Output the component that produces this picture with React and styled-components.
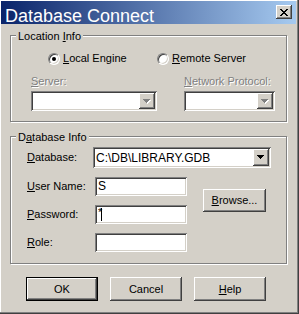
import React from "react";
import styled, { createGlobalStyle } from "styled-components";

const GlobalStyle = createGlobalStyle`
  html, body {
    margin: 0;
    padding: 0;
    background: #d4d0c8;
  }
  body {
    font-family: "Liberation Sans", Arial, sans-serif;
    font-size: 11px;
    color: #000;
  }
`;

const raised = `
  box-shadow: inset -1px -1px #404040, inset 1px 1px #fff,
    inset -2px -2px #808080, inset 2px 2px #d4d0c8;
`;

const sunken = `
  box-shadow: inset 1px 1px #808080, inset -1px -1px #fff,
    inset 2px 2px #404040, inset -2px -2px #d4d0c8;
`;

const Window = styled.div`
  width: 299px;
  height: 314px;
  box-sizing: border-box;
  padding: 1px 3px 2px 1px;
  background: #d4d0c8;
  box-shadow: inset -1px -1px #404040, inset -2px -2px #808080,
    inset 1px 1px #fff;
  display: flex;
  flex-direction: column;
`;

const TitleBar = styled.div`
  height: 23px;
  background: linear-gradient(to right, #0a246a, #a6caf0);
  display: flex;
  align-items: flex-start;
  justify-content: space-between;
  padding: 0 4px 0 4px;
`;

const Title = styled.span`
  color: #fff;
  font-size: 18px;
  line-height: 18px;
  margin-top: 6px;
`;

const CloseButton = styled.div`
  width: 16px;
  height: 14px;
  margin-top: 4px;
  background: #d4d0c8;
  ${raised}
  display: flex;
  align-items: center;
  justify-content: center;
`;

const Body = styled.div`
  padding: 11px 0 0 9px;
  display: flex;
  flex-direction: column;
`;

const Group = styled.div`
  position: relative;
  width: 277px;
  height: ${(p) => p.$h}px;
  box-sizing: border-box;
  border: 1px solid #808080;
  box-shadow: inset 1px 1px #fff, 1px 1px #fff;
  margin-bottom: ${(p) => p.$mb || 0}px;
  padding: ${(p) => p.$pad};
`;

const Legend = styled.span`
  position: absolute;
  top: -6px;
  left: 5px;
  padding: 0 2px;
  line-height: 13px;
  background: #d4d0c8;
`;

const Key = styled.span`
  text-decoration: underline;
`;

const Row = styled.div`
  display: flex;
  gap: ${(p) => p.$gap || 0}px;
  padding-left: ${(p) => p.$left || 0}px;
  margin-top: ${(p) => p.$top || 0}px;
`;

const RadioItem = styled.label`
  display: flex;
  align-items: center;
  gap: 3px;
  width: ${(p) => (p.$w ? `${p.$w}px` : "auto")};
  line-height: 13px;
`;

const RadioCircle = styled.span`
  width: 12px;
  height: 12px;
  box-sizing: border-box;
  border-radius: 50%;
  background: #fff;
  border: 1px solid;
  border-color: #808080 #fff #fff #808080;
  box-shadow: inset 1px 1px #404040, inset -1px -1px #d4d0c8;
  display: flex;
  align-items: center;
  justify-content: center;
`;

const RadioDot = styled.span`
  width: 4px;
  height: 4px;
  border-radius: 50%;
  background: #000;
`;

const Field = styled.div`
  display: flex;
  flex-direction: column;
  gap: 3px;
`;

const Label = styled.span`
  line-height: 13px;
  color: ${(p) => (p.$disabled ? "#808080" : "#000")};
  text-shadow: ${(p) => (p.$disabled ? "1px 1px 0 #fff" : "none")};
`;

const Combo = styled.div`
  width: ${(p) => p.$w}px;
  height: ${(p) => p.$h}px;
  box-sizing: border-box;
  padding: 2px;
  background: #fff;
  ${sunken}
  display: flex;
  align-items: stretch;
  margin-left: ${(p) => p.$ml || 0}px;
  grid-column: ${(p) => p.$col || "auto"};
`;

const ComboText = styled.span`
  flex: 1;
  padding-left: 1px;
  font-size: 12px;
  display: flex;
  align-items: center;
`;

const DropButton = styled.span`
  width: 16px;
  background: #d4d0c8;
  ${raised}
  display: flex;
  align-items: center;
  justify-content: center;
`;

const FormGrid = styled.div`
  display: grid;
  grid-template-columns: 68px 92px 16px 63px;
  grid-template-rows: 21px 19px 19px 19px;
  row-gap: 9px;
  align-items: center;
`;

const FormLabel = styled.span`
  line-height: 13px;
  grid-column: 1;
`;

const TextBox = styled.div`
  grid-column: 2;
  height: 19px;
  box-sizing: border-box;
  padding: 2px 2px 2px 3px;
  background: #fff;
  ${sunken}
  font-size: 12px;
  line-height: 15px;
  display: flex;
  align-items: center;
`;

const Star = styled.span`
  font-size: 11px;
  align-self: flex-start;
  line-height: 10px;
`;

const Caret = styled.span`
  display: inline-block;
  width: 1px;
  height: 13px;
  background: #000;
  margin-left: -1px;
`;

const Button = styled.div`
  width: ${(p) => p.$w || 72}px;
  height: ${(p) => p.$h || 24}px;
  box-sizing: border-box;
  background: #d4d0c8;
  ${raised}
  display: flex;
  align-items: center;
  justify-content: center;
  line-height: 13px;
  ${(p) => p.$default && `border: 1px solid #000;`}
`;

const BrowseCell = styled.div`
  grid-column: 4;
  grid-row: 2 / span 2;
  display: flex;
  align-items: center;
`;

const ButtonRow = styled.div`
  display: flex;
  gap: 12px;
  margin: 13px 0 0 16px;
`;

const Arrow = ({ disabled }) => (
  <svg width="8" height="5" viewBox="0 0 8 5" shapeRendering="crispEdges">
    {disabled && (
      <path d="M1 1h7v1H1zM2 2h5v1H2zM3 3h3v1H3zM4 4h1v1H4z" fill="#fff" />
    )}
    <path
      d="M0 0h7v1H0zM1 1h5v1H1zM2 2h3v1H2zM3 3h1v1H3z"
      fill={disabled ? "#808080" : "#000"}
    />
  </svg>
);

const CloseGlyph = () => (
  <svg width="8" height="7" viewBox="0 0 8 7" shapeRendering="crispEdges">
    <path
      d="M0 0h2v1H0zM6 0h2v1H6zM1 1h2v1H1zM5 1h2v1H5zM2 2h4v1H2zM3 3h2v1H3zM2 4h4v1H2zM1 5h2v1H1zM5 5h2v1H5zM0 6h2v1H0zM6 6h2v1H6z"
      fill="#000"
    />
  </svg>
);

export default function App() {
  return (
    <>
      <GlobalStyle />
      <Window>
        <TitleBar>
          <Title>Database Connect</Title>
          <CloseButton>
            <CloseGlyph />
          </CloseButton>
        </TitleBar>
        <Body>
          <Group $h={87} $mb={14} $pad="16px 0 0 0">
            <Legend>
              Location <Key>I</Key>nfo
            </Legend>
            <Row $left={37}>
              <RadioItem $w={109}>
                <RadioCircle>
                  <RadioDot />
                </RadioCircle>
                <span>
                  <Key>L</Key>ocal Engine
                </span>
              </RadioItem>
              <RadioItem>
                <RadioCircle />
                <span>
                  <Key>R</Key>emote Server
                </span>
              </RadioItem>
            </Row>
            <Row $left={20} $gap={27} $top={10}>
              <Field>
                <Label $disabled>
                  <Key>S</Key>erver:
                </Label>
                <Combo $w={126} $h={20}>
                  <ComboText />
                  <DropButton>
                    <Arrow disabled />
                  </DropButton>
                </Combo>
              </Field>
              <Field>
                <Label $disabled>
                  <Key>N</Key>etwork Protocol:
                </Label>
                <Combo $w={91} $h={20}>
                  <ComboText />
                  <DropButton>
                    <Arrow disabled />
                  </DropButton>
                </Combo>
              </Field>
            </Row>
          </Group>
          <Group $h={128} $pad="10px 0 0 16px">
            <Legend>
              D<Key>a</Key>tabase Info
            </Legend>
            <FormGrid>
              <FormLabel>
                <Key>D</Key>atabase:
              </FormLabel>
              <Combo $w={178} $h={21} $ml={-2} $col="2 / span 3">
                <ComboText>C:\DB\LIBRARY.GDB</ComboText>
                <DropButton>
                  <Arrow />
                </DropButton>
              </Combo>
              <FormLabel>
                <Key>U</Key>ser Name:
              </FormLabel>
              <TextBox>S</TextBox>
              <BrowseCell>
                <Button $w={63} $h={23}>
                  <span>
                    <Key>B</Key>rowse...
                  </span>
                </Button>
              </BrowseCell>
              <FormLabel>
                <Key>P</Key>assword:
              </FormLabel>
              <TextBox>
                <Star>*</Star>
                <Caret />
              </TextBox>
              <FormLabel>
                <Key>R</Key>ole:
              </FormLabel>
              <TextBox />
            </FormGrid>
          </Group>
          <ButtonRow>
            <Button $default>OK</Button>
            <Button>Cancel</Button>
            <Button>
              <span>
                <Key>H</Key>elp
              </span>
            </Button>
          </ButtonRow>
        </Body>
      </Window>
    </>
  );
}
